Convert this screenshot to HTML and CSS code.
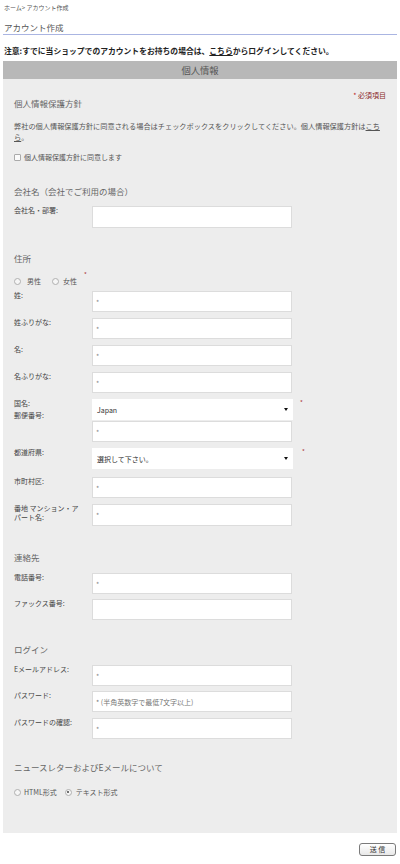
FILE: index.html
```html
<!DOCTYPE html>
<html lang="ja">
<head>
<meta charset="utf-8">
<title>アカウント作成</title>
<link rel="stylesheet" href="styles.css">
</head>
<body>
<div class="page">
  <div class="breadcrumb">ホーム&gt; アカウント作成</div>
  <h1 class="title">アカウント作成</h1>
  <p class="notice">注意:すでに当ショップでのアカウントをお持ちの場合は、<span class="ul">こちら</span>からログインしてください。</p>
  <div class="bar">個人情報</div>
  <div class="panel">
    <div class="required"><span class="req-star">*</span> 必須項目</div>
    <h2 class="sec sec-first">個人情報保護方針</h2>
    <p class="policy">弊社の個人情報保護方針に同意される場合はチェックボックスをクリックしてください。個人情報保護方針は<span class="ul">こちら</span>。</p>
    <label class="check-row"><span class="checkbox"></span>個人情報保護方針に同意します</label>

    <h2 class="sec sec-company">会社名（会社でご利用の場合）</h2>
    <div class="row row-company"><span class="lbl">会社名・部署:</span><input class="field field-tall" type="text"></div>

    <h2 class="sec sec-address">住所</h2>
    <div class="radio-row gender">
      <span class="radio"></span><span class="radio-text">男性</span>
      <span class="radio radio-2"></span><span class="radio-text">女性</span>
      <span class="sup-star">*</span>
    </div>
    <div class="row row-first"><span class="lbl">姓:</span><input class="field" type="text" placeholder="*"></div>
    <div class="row"><span class="lbl">姓ふりがな:</span><input class="field" type="text" placeholder="*"></div>
    <div class="row"><span class="lbl">名:</span><input class="field" type="text" placeholder="*"></div>
    <div class="row"><span class="lbl">名ふりがな:</span><input class="field" type="text" placeholder="*"></div>
    <div class="row"><span class="lbl">国名:</span><div class="select"><span>Japan</span><svg class="arrow" width="4" height="3" viewBox="0 0 4 3"><path d="M0 0H4L2 3Z" fill="#111"/></svg></div><span class="side-star">*</span></div>
    <div class="row row-zip"><span class="lbl">郵便番号:</span><input class="field field-zip" type="text" placeholder="*"></div>
    <div class="row"><span class="lbl">都道府県:</span><div class="select"><span>選択して下さい。</span><svg class="arrow" width="4" height="3" viewBox="0 0 4 3"><path d="M0 0H4L2 3Z" fill="#111"/></svg></div><span class="side-star side-star-2">*</span></div>
    <div class="row row-city"><span class="lbl">市町村区:</span><input class="field" type="text" placeholder="*"></div>
    <div class="row"><span class="lbl lbl-wrap">番地 マンション・アパート名:</span><input class="field field-tall" type="text" placeholder="*"></div>

    <h2 class="sec sec-contact">連絡先</h2>
    <div class="row row-sec"><span class="lbl">電話番号:</span><input class="field" type="text" placeholder="*"></div>
    <div class="row row-tight"><span class="lbl">ファックス番号:</span><input class="field" type="text"></div>

    <h2 class="sec sec-login">ログイン</h2>
    <div class="row row-sec"><span class="lbl">Eメールアドレス:</span><input class="field" type="text" placeholder="*"></div>
    <div class="row row-tight"><span class="lbl">パスワード:</span><input class="field field-pw" type="text" placeholder="* (半角英数字で最低7文字以上)"></div>
    <div class="row"><span class="lbl">パスワードの確認:</span><input class="field" type="text" placeholder="*"></div>

    <h2 class="sec sec-news">ニュースレターおよびEメールについて</h2>
    <div class="radio-row news">
      <span class="radio"></span><span class="radio-text">HTML形式</span>
      <span class="radio radio-3 checked"></span><span class="radio-text">テキスト形式</span>
    </div>
  </div>
  <div class="actions"><button class="submit" type="button">送 信</button></div>
</div>
</body>
</html>
```

FILE: styles.css
```css
* { box-sizing: border-box; }
body {
  margin: 0;
  background: #fff;
  font-family: "Noto Sans CJK JP", "Noto Sans", "Liberation Sans", sans-serif;
  color: #444;
}
.page { padding: 0 3px; }
.ul { text-decoration: underline; }

.breadcrumb {
  font-size: 6px;
  line-height: 8px;
  padding: 4px 0 0 1px;
  color: #555;
}
.title {
  margin: 10px 0 0;
  padding: 0 0 2px 1px;
  font-size: 8.5px;
  line-height: 10px;
  font-weight: normal;
  color: #555;
  border-bottom: 1px solid #aab5e2;
}
.notice {
  margin: 11px 0 5px;
  padding-left: 1px;
  font-size: 7.8px;
  line-height: 10px;
  font-weight: bold;
  color: #222;
}
.bar {
  height: 18px;
  line-height: 18px;
  background: #b8b8b8;
  text-align: center;
  font-size: 9.3px;
  color: #555;
}
.panel {
  background: #ededed;
  padding: 11px 11px 36px;
}
.required {
  float: right;
  font-size: 7px;
  line-height: 10px;
  color: #8b2a2a;
}
.req-star { color: #b22; }

.sec {
  margin: 0;
  font-size: 8.5px;
  line-height: 10px;
  font-weight: normal;
  color: #666;
}
.sec-first { margin-top: 8px; }
.sec-company { margin-top: 24px; }
.sec-address { margin-top: 25px; }
.sec-contact { margin-top: 26px; }
.sec-login { margin-top: 24px; }
.sec-news { margin-top: 23px; }

.policy {
  margin: 13px 0 0;
  font-size: 7.2px;
  line-height: 11px;
  color: #555;
}
.check-row {
  display: flex;
  align-items: center;
  margin-top: 9px;
  font-size: 7px;
  line-height: 10px;
  color: #555;
}
.checkbox {
  width: 7px;
  height: 7px;
  border: 1px solid #aaa;
  border-radius: 1px;
  background: #fafafa;
  margin-right: 3px;
}

.row {
  display: flex;
  align-items: flex-start;
  margin-top: 6px;
}
.row-company { margin-top: 10px; }
.row-first { margin-top: 5px; }
.row-zip { margin-top: -10px; }
.row-city { margin-top: 8px; }
.row-sec { margin-top: 11px; }
.row-tight { margin-top: 5px; }

.lbl {
  flex: 0 0 78px;
  font-size: 7px;
  line-height: 10px;
  color: #444;
  margin-top: -1px;
}
.row-zip .lbl { margin-top: 0; }
.lbl-wrap {
  line-height: 9px;
  margin-top: 0;
  padding-right: 8px;
}
.field {
  width: 200px;
  height: 21px;
  border: 1px solid #dcdcdc;
  background: #fff;
  padding: 0 3px;
  margin: 0;
  font-family: inherit;
  font-size: 7px;
  color: #333;
  outline: none;
}
.field-tall { height: 22px; }
.field-zip { margin-top: 11px; }
.field::placeholder { color: #888; }
.field-pw::placeholder { color: #777; }

.select {
  width: 201px;
  height: 21px;
  background: #fff;
  display: flex;
  align-items: center;
  justify-content: space-between;
  padding: 0 5px 0 5px;
  font-size: 7px;
  color: #333;
}
.arrow { display: block; }
.side-star {
  margin-left: 7px;
  font-size: 6px;
  line-height: 8px;
  color: #a33;
}
.side-star-2 { margin-left: 9px; }

.radio-row {
  display: flex;
  align-items: center;
  height: 10px;
  font-size: 7px;
  line-height: 10px;
  color: #555;
}
.gender { margin-top: 13px; }
.news { margin-top: 15px; }
.radio {
  width: 7px;
  height: 7px;
  border: 1px solid #b0b0b0;
  border-radius: 50%;
  background: #f6f6f6;
  margin-right: 5px;
  position: relative;
}
.radio.checked::after {
  content: "";
  position: absolute;
  left: 1.5px;
  top: 1.5px;
  width: 2px;
  height: 2px;
  border-radius: 50%;
  background: #444;
}
.radio-2 { margin-left: 11px; margin-right: 4px; }
.radio-3 { margin-left: 8px; margin-right: 4px; }
.gender .radio:first-child { margin-right: 6px; }
.news .radio:first-child { margin-right: 3px; }
.sup-star {
  align-self: flex-start;
  margin-left: 7px;
  margin-top: -5px;
  font-size: 6px;
  line-height: 8px;
  color: #a33;
}

.actions {
  display: flex;
  justify-content: flex-end;
  padding: 10px 1px 0 0;
}
.submit {
  width: 37px;
  height: 13px;
  padding: 0;
  border: 1px solid #7a7a7a;
  border-radius: 3px;
  background: linear-gradient(#fff, #e8e8e8);
  font-family: inherit;
  font-size: 7px;
  line-height: 11px;
  color: #333;
}
```
